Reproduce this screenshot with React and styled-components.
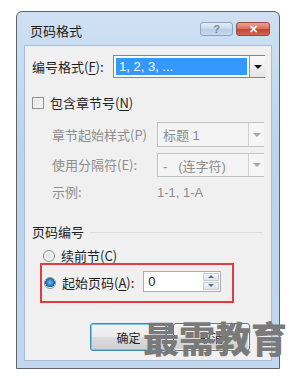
import styled, { createGlobalStyle } from 'styled-components';

const GlobalStyle = createGlobalStyle`
  html, body {
    margin: 0;
    background: #ffffff;
  }
  body {
    font-family: 'Noto Sans CJK SC', 'Liberation Sans', sans-serif;
    font-size: 13px;
    color: #1e1e1e;
  }
`;

const Page = styled.div`
  position: relative;
  width: 295px;
  height: 377px;
  padding: 11px 0 0 16px;
  box-sizing: border-box;
`;

const Window = styled.div`
  width: 264px;
  height: 358px;
  box-sizing: border-box;
  border: 1px solid #5b6570;
  border-radius: 6px 6px 0 0;
  background: linear-gradient(180deg, #cfe0f3 0%, #bcd3ec 40%, #c3d8ef 100%);
  padding: 0 7px 7px 7px;
  display: flex;
  flex-direction: column;
`;

const TitleBar = styled.div`
  height: 33px;
  display: flex;
  align-items: center;
  padding: 0 2px 0 6px;
`;

const Title = styled.span`
  flex: 1;
  font-size: 13px;
  color: #1a1a1a;
  margin-top: 3px;
`;

const CaptionButton = styled.div`
  width: ${(p) => p.$w}px;
  height: 14px;
  margin-left: 3px;
  margin-top: 1px;
  border: 1px solid ${(p) => (p.$close ? '#9a4a3f' : '#8ba4c0')};
  border-radius: 3px;
  box-sizing: border-box;
  display: flex;
  align-items: center;
  justify-content: center;
  font-size: 11px;
  font-weight: 700;
  font-family: 'Liberation Sans', sans-serif;
  color: ${(p) => (p.$close ? '#ffffff' : '#6f8aa8')};
  background: ${(p) =>
    p.$close
      ? 'linear-gradient(180deg, #e8a394 0%, #d6705d 48%, #c4432d 52%, #d2675a 100%)'
      : 'linear-gradient(180deg, #e2ecf7 0%, #cad9ea 48%, #b9cde3 52%, #c7d8ec 100%)'};
`;

const Content = styled.div`
  flex: 1;
  background: #f0f0f0;
  border: 1px solid #a8bdd4;
  display: flex;
  flex-direction: column;
  padding-left: 7px;
`;

const Row = styled.div`
  display: flex;
  align-items: center;
  height: ${(p) => p.$h}px;
  margin-top: ${(p) => p.$mt}px;
  padding-left: ${(p) => p.$indent || 0}px;
`;

const Label = styled.span`
  width: ${(p) => (p.$w ? `${p.$w}px` : 'auto')};
  flex-shrink: 0;
  white-space: nowrap;
  color: ${(p) => (p.$disabled ? '#8d8d8d' : '#1e1e1e')};
  font-size: 13px;
  line-height: 16px;

  & u {
    text-underline-offset: 2px;
  }
`;

const Select = styled.div`
  width: ${(p) => p.$w}px;
  height: ${(p) => p.$h}px;
  box-sizing: border-box;
  border: 1px solid ${(p) => (p.$disabled ? '#c2c2c2' : '#7f8790')};
  background: ${(p) => (p.$disabled ? '#f4f4f4' : '#ffffff')};
  display: flex;
  padding: 2px 0 2px 2px;
`;

const SelectValue = styled.div`
  flex: 1;
  display: flex;
  align-items: center;
  padding-left: 3px;
  font-size: 13px;
  font-family: 'Liberation Sans', 'Noto Sans CJK SC', sans-serif;
  background: ${(p) => (p.$selected ? '#3399ff' : 'transparent')};
  color: ${(p) => (p.$selected ? '#ffffff' : '#8d8d8d')};
  margin-right: 2px;
`;

const ArrowButton = styled.div`
  width: 16px;
  margin: -2px -1px -2px 0;
  box-sizing: border-box;
  border-left: 1px solid ${(p) => (p.$disabled ? '#d0d0d0' : '#8f969e')};
  background: ${(p) =>
    p.$disabled ? '#f6f6f6' : 'linear-gradient(180deg, #fbfbfb 0%, #e4e4e4 100%)'};
  display: flex;
  align-items: center;
  justify-content: center;

  &::after {
    content: '';
    border-left: 4px solid transparent;
    border-right: 4px solid transparent;
    border-top: 4px solid ${(p) => (p.$disabled ? '#a8a8a8' : '#111111')};
  }
`;

const CheckBox = styled.span`
  width: 12px;
  height: 12px;
  box-sizing: border-box;
  border: 1px solid #8e8f8f;
  background: linear-gradient(135deg, #e3e3e3 0%, #f6f6f6 100%);
  box-shadow: inset 0 0 0 1px #f4f4f4;
  margin-right: 6px;
  flex-shrink: 0;
`;

const Radio = styled.span`
  width: 12px;
  height: 12px;
  border-radius: 50%;
  box-sizing: border-box;
  border: 1px solid #8e8f8f;
  background: ${(p) =>
    p.$checked
      ? 'radial-gradient(circle at 50% 45%, #6ec0f2 0%, #2a7fc4 45%, #1b5a96 62%, #eef2f6 66%)'
      : 'radial-gradient(circle, #e1e1e1 0%, #f6f6f6 100%)'};
  margin-left: ${(p) => p.$ml}px;
  margin-right: 6px;
  flex-shrink: 0;
`;

const Example = styled.span`
  font-family: 'Liberation Sans', sans-serif;
  font-size: 13px;
  color: #8d8d8d;
`;

const GroupHeader = styled.div`
  display: flex;
  align-items: center;
  height: 16px;
  margin-top: 24px;

  &::after {
    content: '';
    flex: 1;
    height: 1px;
    background: #dcdcdc;
    margin: 1px 8px 0 6px;
  }
`;

const Highlight = styled.div`
  width: 194px;
  height: 40px;
  box-sizing: border-box;
  margin-left: 8px;
  border: 2px solid #e23a40;
  display: flex;
  align-items: center;
`;

const NumberInput = styled.div`
  width: 78px;
  height: 21px;
  box-sizing: border-box;
  border: 1px solid #abadb3;
  background: #ffffff;
  display: flex;
  margin-left: 9px;
  margin-bottom: 4px;
`;

const NumberValue = styled.span`
  flex: 1;
  padding-left: 4px;
  font-family: 'Liberation Sans', sans-serif;
  font-size: 13px;
  line-height: 19px;
`;

const Spinner = styled.div`
  width: 16px;
  display: flex;
  flex-direction: column;
  padding: 1px 1px 1px 0;
  gap: 1px;
`;

const SpinHalf = styled.div`
  flex: 1;
  border: 1px solid #c3cad3;
  background: linear-gradient(180deg, #f4f6f9 0%, #dfe4ea 100%);
  display: flex;
  align-items: center;
  justify-content: center;

  &::after {
    content: '';
    border-left: 3px solid transparent;
    border-right: 3px solid transparent;
    ${(p) => (p.$up ? 'border-bottom' : 'border-top')}: 3px solid #4d6f93;
  }
`;

const ButtonRow = styled.div`
  display: flex;
  gap: 6px;
  margin-top: 20px;
  padding-left: 58px;
`;

const DialogButton = styled.div`
  width: 77px;
  height: 28px;
  box-sizing: border-box;
  border: 1px solid ${(p) => (p.$default ? '#3d8ab8' : '#707070')};
  border-radius: 3px;
  box-shadow: ${(p) => (p.$default ? 'inset 0 0 0 1px #7dc4e8' : 'inset 0 0 0 1px #fbfbfb')};
  background: linear-gradient(180deg, #f3f3f3 0%, #ebebeb 48%, #dcdcdc 52%, #cfcfcf 100%);
  display: flex;
  align-items: center;
  justify-content: center;
  font-size: 12px;
  color: #1e1e1e;
`;

const Watermark = styled.div`
  position: absolute;
  left: 143px;
  top: 317px;
  font-family: 'Noto Sans CJK SC', sans-serif;
  font-size: 36px;
  font-weight: 900;
  line-height: 40px;
  color: #7a7a7a;
`;

export default function App() {
  return (
    <>
      <GlobalStyle />
      <Page>
        <Window>
          <TitleBar>
            <Title>页码格式</Title>
            <CaptionButton $w={33}>?</CaptionButton>
            <CaptionButton $w={34} $close>
              ✕
            </CaptionButton>
          </TitleBar>
          <Content>
            <Row $h={23} $mt={9}>
              <Label $w={81}>
                编号格式(<u>F</u>):
              </Label>
              <Select $w={152} $h={23}>
                <SelectValue $selected>1, 2, 3, ...</SelectValue>
                <ArrowButton />
              </Select>
            </Row>

            <Row $h={18} $mt={16}>
              <CheckBox />
              <Label>
                包含章节号(<u>N</u>)
              </Label>
            </Row>

            <Row $h={25} $mt={10} $indent={20}>
              <Label $w={105} $disabled>
                章节起始样式(P)
              </Label>
              <Select $w={107} $h={25} $disabled>
                <SelectValue>标题 1</SelectValue>
                <ArrowButton $disabled />
              </Select>
            </Row>

            <Row $h={24} $mt={6} $indent={20}>
              <Label $w={105} $disabled>
                使用分隔符(E):
              </Label>
              <Select $w={107} $h={24} $disabled>
                <SelectValue>-&nbsp;&nbsp;&nbsp;(连字符)</SelectValue>
                <ArrowButton $disabled />
              </Select>
            </Row>

            <Row $h={16} $mt={7} $indent={20}>
              <Label $w={105} $disabled>
                示例:
              </Label>
              <Example>1-1, 1-A</Example>
            </Row>

            <GroupHeader>
              <Label>页码编号</Label>
            </GroupHeader>

            <Row $h={14} $mt={9}>
              <Radio $ml={11} />
              <Label>
                续前节(<u>C</u>)
              </Label>
            </Row>

            <Highlight>
              <Radio $ml={2} $checked />
              <Label>
                起始页码(<u>A</u>):
              </Label>
              <NumberInput>
                <NumberValue>0</NumberValue>
                <Spinner>
                  <SpinHalf $up />
                  <SpinHalf />
                </Spinner>
              </NumberInput>
            </Highlight>

            <ButtonRow>
              <DialogButton $default>确定</DialogButton>
              <DialogButton>取消</DialogButton>
            </ButtonRow>
          </Content>
        </Window>
        <Watermark>最需教育</Watermark>
      </Page>
    </>
  );
}
